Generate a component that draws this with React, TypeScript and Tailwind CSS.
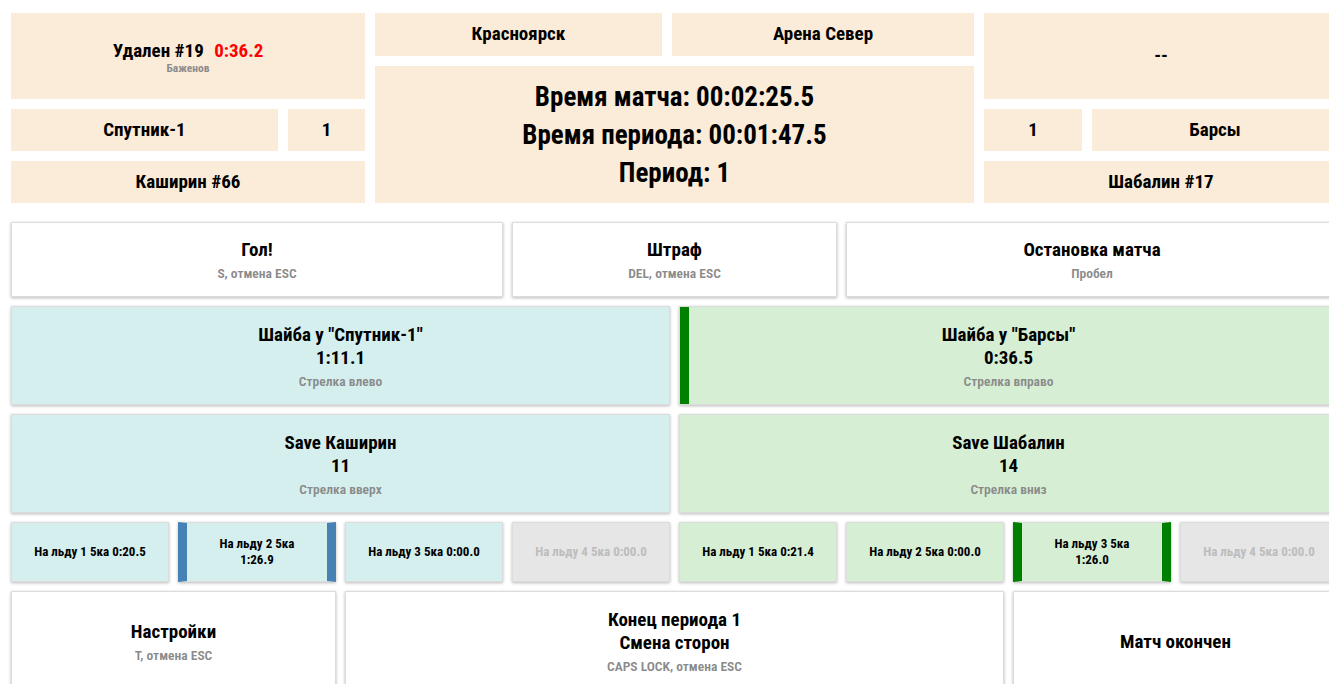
import type { ReactNode } from "react";

// Scoreboard operator panel: header with teams/penalties, then the hotkey grid

const Panel = ({ className = "", children }: { className?: string; children: ReactNode }) => (
  <div className={`bg-[#fbebd9] flex flex-col items-center justify-center text-[19px] font-bold text-black ${className}`}>
    {children}
  </div>
);

type Tone = "white" | "cyan" | "green" | "off";

const toneClass: Record<Tone, string> = {
  white: "bg-white",
  cyan: "bg-[#d5efef]",
  green: "bg-[#d6efd4]",
  off: "bg-[#e6e6e6] text-[#bdbdbd]",
};

const SHADOW = "shadow-[0_1px_3px_rgba(0,0,0,0.28)]";

const Key = ({
  tone = "white",
  span,
  title,
  hint,
  shadow = SHADOW,
}: {
  tone?: Tone;
  span: string;
  title: ReactNode;
  hint?: string;
  shadow?: string;
}) => (
  <div
    className={`${span} ${toneClass[tone]} ${shadow} flex flex-col items-center justify-center text-center border border-[#dcdcdc]`}
  >
    <div className="text-[19px] leading-[23px] font-bold">{title}</div>
    {hint && <div className="mt-[4px] text-[13.5px] leading-[16px] font-semibold text-[#8a8a8a]">{hint}</div>}
  </div>
);

const Line = ({ tone, children, bar }: { tone: Tone; children: ReactNode; bar?: string }) => (
  <div
    className={`${toneClass[tone]} ${bar ?? ""} flex items-center justify-center text-center px-[6px] text-[13px] leading-[16px] font-bold border border-[#dcdcdc] ${SHADOW}`}
  >
    {children}
  </div>
);

export default function App() {
  return (
    <div className="h-screen w-screen overflow-hidden bg-white text-black font-['Roboto_Condensed','Liberation_Sans_Narrow','DejaVu_Sans_Condensed',Roboto,sans-serif] [font-stretch:condensed]">
      {/* header */}
      <div className="flex gap-[10px] pt-[13px] pl-[11px] w-[1338px]">
        <div className="w-[354px] flex flex-col gap-[10px]">
          <Panel className="h-[86px]">
            <div className="leading-[22px] mt-[1px]">
              Удален #19 <span className="ml-[6px] text-[#ff0000]">0:36.2</span>
            </div>
            <div className="text-[11.5px] leading-[12px] text-[#8c8c8c]">Баженов</div>
          </Panel>
          <div className="flex gap-[10px]">
            <Panel className="h-[42px] flex-1">Спутник-1</Panel>
            <Panel className="h-[42px] w-[77px]">1</Panel>
          </div>
          <Panel className="h-[42px]">Каширин #66</Panel>
        </div>

        <div className="w-[599px] flex flex-col gap-[10px]">
          <div className="flex gap-[10px]">
            <Panel className="h-[43px] w-[287px]">Красноярск</Panel>
            <Panel className="h-[43px] flex-1">Арена Север</Panel>
          </div>
          <Panel className="h-[137px] text-[27px] leading-[38px]">
            <div>Время матча: 00:02:25.5</div>
            <div>Время периода: 00:01:47.5</div>
            <div>Период: 1</div>
          </Panel>
        </div>

        <div className="w-[354px] flex flex-col gap-[10px]">
          <Panel className="h-[86px]">--</Panel>
          <div className="flex gap-[10px]">
            <Panel className="h-[42px] w-[98px]">1</Panel>
            <Panel className="h-[42px] flex-1">Барсы</Panel>
          </div>
          <Panel className="h-[42px]">Шабалин #17</Panel>
        </div>
      </div>

      {/* controls */}
      <div className="mt-[19px] ml-[11px] w-[1327px] grid grid-cols-8 grid-rows-[75px_99px_99px_60px_100px] gap-[9px]">
        <Key span="col-span-3" title="Гол!" hint="S, отмена ESC" />
        <Key span="col-span-2" title="Штраф" hint="DEL, отмена ESC" />
        <Key span="col-span-3" title="Остановка матча" hint="Пробел" />

        <Key
          tone="cyan"
          span="col-span-4"
          title={
            <>
              Шайба у "Спутник-1"
              <br />
              1:11.1
            </>
          }
          hint="Стрелка влево"
        />
        {/* active side: green stripe drawn inside so the text stays centred */}
        <Key
          tone="green"
          span="col-span-4"
          shadow="shadow-[inset_9px_0_0_#008000,0_1px_3px_rgba(0,0,0,0.28)]"
          title={
            <>
              Шайба у "Барсы"
              <br />
              0:36.5
            </>
          }
          hint="Стрелка вправо"
        />

        <Key
          tone="cyan"
          span="col-span-4"
          title={
            <>
              Save Каширин
              <br />
              11
            </>
          }
          hint="Стрелка вверх"
        />
        <Key
          tone="green"
          span="col-span-4"
          title={
            <>
              Save Шабалин
              <br />
              14
            </>
          }
          hint="Стрелка вниз"
        />

        <Line tone="cyan">На льду 1 5ка 0:20.5</Line>
        <Line tone="cyan" bar="border-x-[9px] border-x-[#4682b4]">
          На льду 2 5ка
          <br />
          1:26.9
        </Line>
        <Line tone="cyan">На льду 3 5ка 0:00.0</Line>
        <Line tone="off">На льду 4 5ка 0:00.0</Line>
        <Line tone="green">На льду 1 5ка 0:21.4</Line>
        <Line tone="green">На льду 2 5ка 0:00.0</Line>
        <Line tone="green" bar="border-x-[9px] border-x-[#008000]">
          На льду 3 5ка
          <br />
          1:26.0
        </Line>
        <Line tone="off">На льду 4 5ка 0:00.0</Line>

        <Key span="col-span-2" title="Настройки" hint="T, отмена ESC" />
        <Key
          span="col-span-4"
          title={
            <>
              Конец периода 1
              <br />
              Смена сторон
            </>
          }
          hint="CAPS LOCK, отмена ESC"
        />
        <Key span="col-span-2" title="Матч окончен" />
      </div>
    </div>
  );
}
